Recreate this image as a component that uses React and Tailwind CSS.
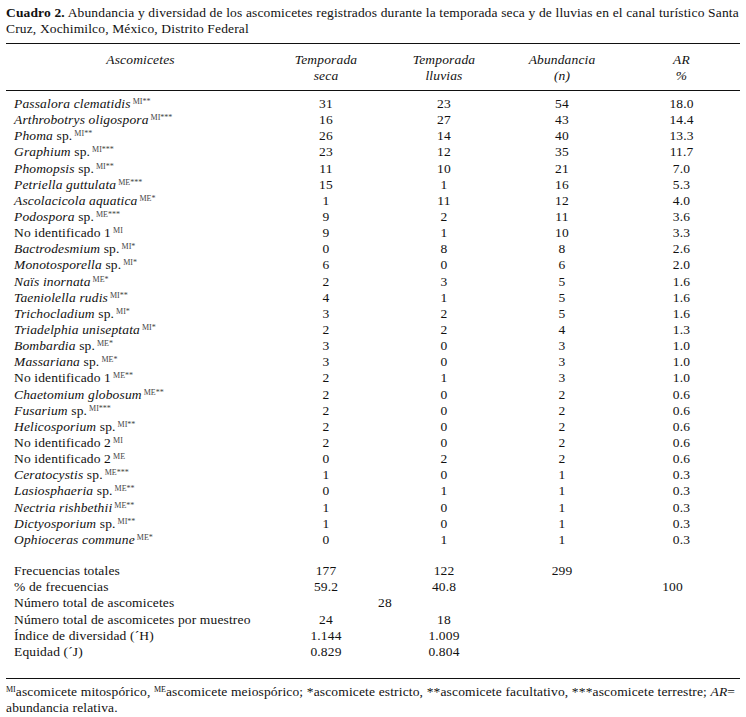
const rows = [
  ["Passalora clematidis", "", "MI**", 31, 23, 54, "18.0"],
  ["Arthrobotrys oligospora", "", "MI***", 16, 27, 43, "14.4"],
  ["Phoma", " sp.", "MI**", 26, 14, 40, "13.3"],
  ["Graphium", " sp.", "MI***", 23, 12, 35, "11.7"],
  ["Phomopsis", " sp.", "MI**", 11, 10, 21, "7.0"],
  ["Petriella guttulata", "", "ME***", 15, 1, 16, "5.3"],
  ["Ascolacicola aquatica", "", "ME*", 1, 11, 12, "4.0"],
  ["Podospora", " sp.", "ME***", 9, 2, 11, "3.6"],
  ["", "No identificado 1", "MI", 9, 1, 10, "3.3"],
  ["Bactrodesmium", " sp.", "MI*", 0, 8, 8, "2.6"],
  ["Monotosporella", " sp.", "MI*", 6, 0, 6, "2.0"],
  ["Naïs inornata", "", "ME*", 2, 3, 5, "1.6"],
  ["Taeniolella rudis", "", "MI**", 4, 1, 5, "1.6"],
  ["Trichocladium", " sp.", "MI*", 3, 2, 5, "1.6"],
  ["Triadelphia uniseptata", "", "MI*", 2, 2, 4, "1.3"],
  ["Bombardia", " sp.", "ME*", 3, 0, 3, "1.0"],
  ["Massariana", " sp.", "ME*", 3, 0, 3, "1.0"],
  ["", "No identificado 1", "ME**", 2, 1, 3, "1.0"],
  ["Chaetomium globosum", "", "ME**", 2, 0, 2, "0.6"],
  ["Fusarium", " sp.", "MI***", 2, 0, 2, "0.6"],
  ["Helicosporium", " sp.", "MI**", 2, 0, 2, "0.6"],
  ["", "No identificado 2", "MI", 2, 0, 2, "0.6"],
  ["", "No identificado 2", "ME", 0, 2, 2, "0.6"],
  ["Ceratocystis", " sp.", "ME***", 1, 0, 1, "0.3"],
  ["Lasiosphaeria", " sp.", "ME**", 0, 1, 1, "0.3"],
  ["Nectria rishbethii", "", "ME**", 1, 0, 1, "0.3"],
  ["Dictyosporium", " sp.", "MI**", 1, 0, 1, "0.3"],
  ["Ophioceras commune", "", "ME*", 0, 1, 1, "0.3"],
];

const grid = "grid grid-cols-[261px_118px_118px_118px_121px]";

function Sup({ children }) {
  return <sup className="ml-[2px] text-[8px] tracking-normal text-[#444]">{children}</sup>;
}

function Rule() {
  return <div className="h-px bg-[#111]" />;
}

export default function App() {
  return (
    <div className="min-h-[717px] w-[746px] bg-white px-[6px] pt-[5px] font-['Liberation_Serif',serif] text-[13.5px] leading-[16px] tracking-[0.15px] text-[#111]">
      <p className="whitespace-nowrap">
        <b>Cuadro 2.</b> Abundancia y diversidad de los ascomicetes registrados durante la temporada seca y de lluvias en el canal turístico Santa
        <br />
        Cruz, Xochimilco, México, Distrito Federal
      </p>

      <div className="mt-[6px]">
        <Rule />
        <div className={`${grid} pt-[8px] pb-[6px] text-center italic`}>
          <div className="pl-[8px]">Ascomicetes</div>
          <div>Temporada<br />seca</div>
          <div>Temporada<br />lluvias</div>
          <div>Abundancia<br />(n)</div>
          <div>AR<br />%</div>
        </div>
        <Rule />

        <div className="pt-[5px]">
          {rows.map(([it, plain, sup, a, b, c, d], i) => (
            <div key={i} className={`${grid} h-[16.15px] leading-[16.15px]`}>
              <div className="pl-[8px] whitespace-nowrap">
                {it && <i>{it}</i>}
                {plain}
                <Sup>{sup}</Sup>
              </div>
              <div className="text-center">{a}</div>
              <div className="text-center">{b}</div>
              <div className="text-center">{c}</div>
              <div className="text-center">{d}</div>
            </div>
          ))}
        </div>

        <div className="pt-[15px] pb-[18px] leading-[16.2px]">
          <div className={grid}>
            <div className="pl-[8px]">Frecuencias totales</div>
            <div className="text-center">177</div>
            <div className="text-center">122</div>
            <div className="text-center">299</div>
            <div />
          </div>
          <div className={grid}>
            <div className="pl-[8px]">% de frecuencias</div>
            <div className="text-center">59.2</div>
            <div className="text-center">40.8</div>
            <div />
            <div className="pr-[18px] text-center">100</div>
          </div>
          <div className={grid}>
            <div className="pl-[8px]">Número total de ascomicetes</div>
            <div className="col-span-2 text-center">28</div>
            <div />
            <div />
          </div>
          <div className={grid}>
            <div className="pl-[8px]">Número total de ascomicetes por muestreo</div>
            <div className="text-center">24</div>
            <div className="text-center">18</div>
            <div />
            <div />
          </div>
          <div className={grid}>
            <div className="pl-[8px]">Índice de diversidad (´H)</div>
            <div className="text-center">1.144</div>
            <div className="text-center">1.009</div>
            <div />
            <div />
          </div>
          <div className={grid}>
            <div className="pl-[8px]">Equidad (´J)</div>
            <div className="text-center">0.829</div>
            <div className="text-center">0.804</div>
            <div />
            <div />
          </div>
        </div>

        <Rule />
        <p className="pt-[5px]">
          <sup className="text-[8px] tracking-normal">MI</sup>ascomicete mitospórico, <sup className="text-[8px] tracking-normal">ME</sup>ascomicete meiospórico; *ascomicete estricto, **ascomicete facultativo, ***ascomicete terrestre; <i>AR</i>=
          <br />
          abundancia relativa.
        </p>
      </div>
    </div>
  );
}
